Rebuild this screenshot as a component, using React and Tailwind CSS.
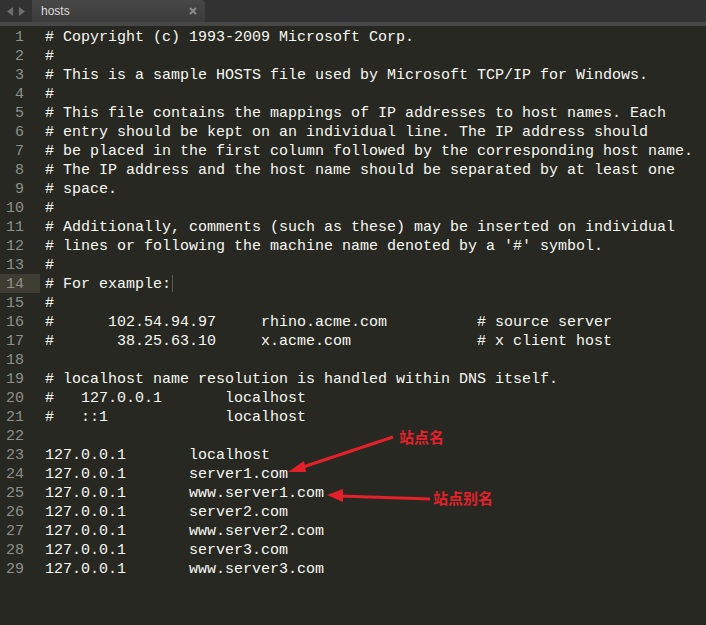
import React from "react";

const lines = [
  "# Copyright (c) 1993-2009 Microsoft Corp.",
  "#",
  "# This is a sample HOSTS file used by Microsoft TCP/IP for Windows.",
  "#",
  "# This file contains the mappings of IP addresses to host names. Each",
  "# entry should be kept on an individual line. The IP address should",
  "# be placed in the first column followed by the corresponding host name.",
  "# The IP address and the host name should be separated by at least one",
  "# space.",
  "#",
  "# Additionally, comments (such as these) may be inserted on individual",
  "# lines or following the machine name denoted by a '#' symbol.",
  "#",
  "# For example:",
  "#",
  "#      102.54.94.97     rhino.acme.com          # source server",
  "#       38.25.63.10     x.acme.com              # x client host",
  "",
  "# localhost name resolution is handled within DNS itself.",
  "#   127.0.0.1       localhost",
  "#   ::1             localhost",
  "",
  "127.0.0.1       localhost",
  "127.0.0.1       server1.com",
  "127.0.0.1       www.server1.com",
  "127.0.0.1       server2.com",
  "127.0.0.1       www.server2.com",
  "127.0.0.1       server3.com",
  "127.0.0.1       www.server3.com",
];

const App = () => {
  return (
    <div className="relative w-[706px] h-[625px] overflow-hidden bg-[#272822]">
      {/* tab bar */}
      <div className="flex h-[22px] bg-[#323232]">
        <div className="flex w-[32px] items-center justify-center gap-[6px]">
          <svg width="6" height="9" viewBox="0 0 6 9">
            <polygon points="6,0 6,9 0,4.5" fill="#6e6e6e" />
          </svg>
          <svg width="6" height="9" viewBox="0 0 6 9">
            <polygon points="0,0 0,9 6,4.5" fill="#6e6e6e" />
          </svg>
        </div>
        <div className="flex w-[173px] items-center justify-between rounded-tr-[4px] bg-gradient-to-b from-[#474747] to-[#3c3c3c] pl-[9px] pr-[8px] font-['Liberation_Sans',sans-serif] text-[12px] text-[#dcdcdc]">
          <span>hosts</span>
          <svg width="8" height="8" viewBox="0 0 8 8">
            <path d="M1 1 L7 7 M7 1 L1 7" stroke="#8a8a8a" strokeWidth="2" />
          </svg>
        </div>
      </div>
      <div className="h-[4px] bg-[#474747]" />

      {/* editor */}
      <div className="pt-[1px] font-['Liberation_Mono',monospace] text-[15px] leading-[19px]">
        {lines.map((line, idx) => (
          <div key={idx} className="flex h-[19px] pt-[1px]">
            <div
              className={`-mt-[1px] w-[40px] shrink-0 pt-[1px] pr-[16px] text-right text-[#8f908a] ${
                idx === 13 ? "bg-[#3e3d32]" : ""
              }`}
            >
              {idx + 1}
            </div>
            <div className="relative whitespace-pre pl-[5px] text-[#f8f8f2]">
              {line}
              {idx === 13 && (
                <span className="absolute right-[-2px] top-[0px] h-[17px] w-[1px] bg-[#5a5a50]" />
              )}
            </div>
          </div>
        ))}
      </div>

      {/* annotations */}
      <svg className="absolute left-0 top-0" width="706" height="625">
        <line x1="393" y1="437" x2="300" y2="468" stroke="#e5202a" strokeWidth="3" />
        <polygon points="288,472 304,461 306,472" fill="#e5202a" />
        <line x1="430" y1="499" x2="340" y2="496" stroke="#e5202a" strokeWidth="3" />
        <polygon points="327,495 343,489 343,502" fill="#e5202a" />
      </svg>
      <span className="absolute left-[399px] top-[428px] font-['Noto_Sans_CJK_SC',sans-serif] text-[15px] font-bold leading-[18px] text-[#e5202a]">
        站点名
      </span>
      <span className="absolute left-[433px] top-[489px] font-['Noto_Sans_CJK_SC',sans-serif] text-[15px] font-bold leading-[18px] text-[#e5202a]">
        站点别名
      </span>
    </div>
  );
};

export default App;
